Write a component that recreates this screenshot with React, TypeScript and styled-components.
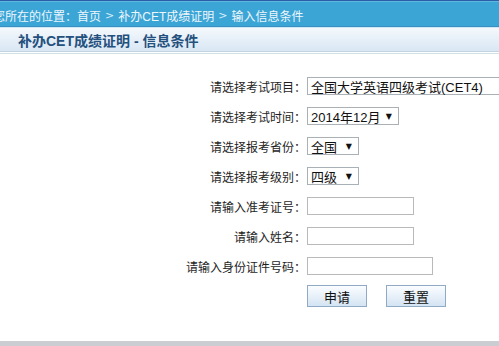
import styled, { createGlobalStyle } from "styled-components";

const GlobalStyle = createGlobalStyle`
  html, body {
    margin: 0;
    padding: 0;
    background: #ffffff;
    overflow: hidden;
  }
  body {
    font-family: "Liberation Sans", "Noto Sans CJK SC", sans-serif;
    font-size: 12px;
    color: #222;
  }
`;

const Page = styled.div`
  width: 499px;
  height: 346px;
  display: flex;
  flex-direction: column;
  overflow: hidden;
`;

const TopBar = styled.div`
  height: 26px;
  flex: none;
  display: flex;
  align-items: center;
  background: #3ba5d6;
  border-top: 1px solid #2a5fa6;
  box-shadow: inset 0 1px 0 #5fb8e0, inset 0 -1px 0 #3a8fc2;
  border-bottom: 1px solid #cde9f6;
  color: #eef7fc;
  font-size: 12px;
  white-space: nowrap;
`;

const Crumbs = styled.div`
  display: flex;
  align-items: center;
  margin-left: -7px;
  padding-top: 2px;
`;

const CrumbLead = styled.span`
  margin-right: 0;
`;

const Sep = styled.span`
  margin: 0 4px;
  font-family: "DejaVu Sans", sans-serif;
  font-size: 11px;
  color: #d8eef9;
`;

const TitleBar = styled.div`
  height: 23px;
  flex: none;
  display: flex;
  align-items: center;
  padding-left: 18px;
  background: linear-gradient(#f4f8fc, #d9e7f4);
  border-bottom: 1px solid #c3d5e3;
  box-shadow: 0 1px 0 #ffffff, 0 2px 0 #d3dfe9;
`;

const Title = styled.h2`
  margin: 0;
  font-size: 14px;
  font-weight: bold;
  color: #24507e;
  white-space: pre;
`;

const Body = styled.div`
  flex: 1;
  border-bottom: 5px solid #cacdd1;
  padding-top: 19px;
`;

const Form = styled.div`
  display: grid;
  grid-template-columns: 306px auto;
  grid-auto-rows: 30px;
  column-gap: 1px;
  align-items: center;
`;

const Label = styled.label`
  justify-self: end;
  font-size: 12px;
  color: #1e1e1e;
  white-space: nowrap;
`;

const Select = styled.div<{ $width: number; $open?: boolean }>`
  width: ${p => p.$width}px;
  height: 16px;
  box-sizing: content-box;
  display: flex;
  align-items: center;
  justify-content: space-between;
  border: 1px solid #a9b0b6;
  ${p => (p.$open ? "border-right: none;" : "")}
  background: #fff;
  padding: 0 0 0 3px;
  font-size: 13px;
  color: #111;
  white-space: nowrap;
`;

const Arrow = styled.span`
  font-family: "DejaVu Sans", sans-serif;
  font-size: 8px;
  color: #111;
  margin-right: 6px;
`;

const TextInput = styled.input<{ $width: number }>`
  width: ${p => p.$width}px;
  height: 16px;
  box-sizing: content-box;
  border: 1px solid #b9b9b9;
  padding: 0;
  margin: 0;
  background: #fff;
  outline: none;
`;

const Buttons = styled.div`
  display: flex;
  gap: 19px;
  grid-column: 2;
`;

const Button = styled.button`
  width: 60px;
  height: 22px;
  border: 1px solid #8fa9c6;
  background: linear-gradient(#fbfdff, #d4e4f3);
  font-family: "Liberation Sans", "Noto Sans CJK SC", sans-serif;
  font-size: 13px;
  color: #111;
  padding: 0;
  cursor: pointer;
`;

type SelectRow = { label: string; value: string; width: number; open?: boolean };
type InputRow = { label: string; width: number };

const selects: SelectRow[] = [
  { label: "请选择考试项目：", value: "全国大学英语四级考试(CET4)", width: 200, open: true },
  { label: "请选择考试时间：", value: "2014年12月", width: 87 },
  { label: "请选择报考省份：", value: "全国", width: 47 },
  { label: "请选择报考级别：", value: "四级", width: 47 },
];

const inputs: InputRow[] = [
  { label: "请输入准考证号：", width: 105 },
  { label: "请输入姓名：", width: 105 },
  { label: "请输入身份证件号码：", width: 124 },
];

export default function App() {
  return (
    <Page>
      <GlobalStyle />
      <TopBar>
        <Crumbs>
          <CrumbLead>您所在的位置：</CrumbLead>
          <span>首页</span>
          <Sep>&gt;</Sep>
          <span>补办CET成绩证明</span>
          <Sep>&gt;</Sep>
          <span>输入信息条件</span>
        </Crumbs>
      </TopBar>
      <TitleBar>
        <Title>补办CET成绩证明 - 信息条件</Title>
      </TitleBar>
      <Body>
        <Form>
          {selects.map(s => (
            <>
              <Label key={s.label}>{s.label}</Label>
              <Select $width={s.width} $open={s.open}>
                <span>{s.value}</span>
                {!s.open && <Arrow>▼</Arrow>}
              </Select>
            </>
          ))}
          {inputs.map(i => (
            <>
              <Label key={i.label}>{i.label}</Label>
              <TextInput $width={i.width} />
            </>
          ))}
          <Buttons>
            <Button>申请</Button>
            <Button>重置</Button>
          </Buttons>
        </Form>
      </Body>
    </Page>
  );
}
